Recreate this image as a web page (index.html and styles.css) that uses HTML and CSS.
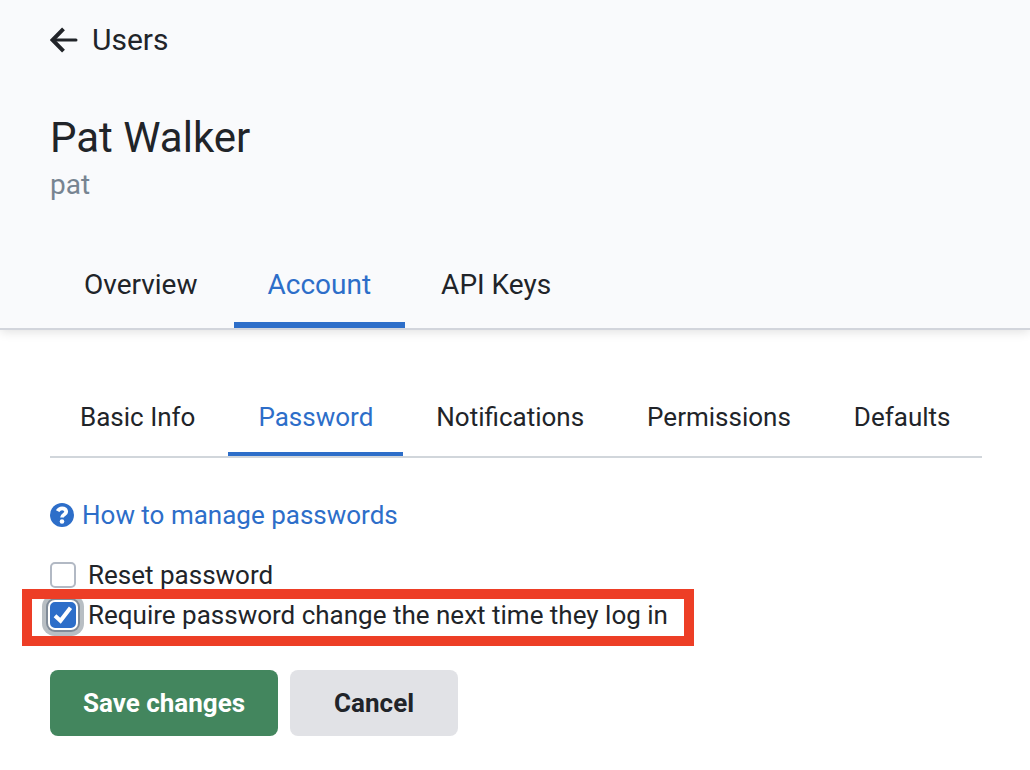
FILE: index.html
```html
<!DOCTYPE html>
<html lang="en">
<head>
<meta charset="utf-8">
<title>Pat Walker - Users</title>
<link rel="stylesheet" href="styles.css">
</head>
<body>
<header class="page-header">
  <a class="back" href="#users">
    <svg class="back-icon" viewBox="0 0 28 28" aria-hidden="true"><path class="shaft" d="M26 14H3"/><path d="M13.500 2.800L2.500 14L13.500 25.200"/></svg>
    <span>Users</span>
  </a>
  <h1 class="name">Pat Walker</h1>
  <p class="login">pat</p>
  <nav class="tabs">
    <a class="tab" href="#overview">Overview</a>
    <a class="tab active" href="#account" aria-current="page">Account</a>
    <a class="tab" href="#api-keys">API Keys</a>
  </nav>
</header>
<main class="content">
  <nav class="subtabs">
    <a class="subtab" href="#basic-info">Basic Info</a>
    <a class="subtab active" href="#password" aria-current="page">Password</a>
    <a class="subtab" href="#notifications">Notifications</a>
    <a class="subtab" href="#permissions">Permissions</a>
    <a class="subtab" href="#defaults">Defaults</a>
  </nav>
  <a class="help" href="#help">
    <svg class="help-icon" viewBox="0 0 24 24" aria-hidden="true"><circle cx="12" cy="12" r="12"/><path d="M7.700 8.200C8.700 6.200 10 5.300 12.100 5.300C14.500 5.300 16.200 6.700 16.200 8.700C16.200 11.500 12 11.500 12 14.600"/><circle class="dot" cx="12" cy="18.500" r="2.300"/></svg>
    <span>How to manage passwords</span>
  </a>
  <form class="form">
    <div class="option">
      <input class="check" type="checkbox" id="reset">
      <label for="reset">Reset password</label>
    </div>
    <div class="option highlighted">
      <span class="check-wrap">
        <input class="check focused" type="checkbox" id="require" checked>
        <svg class="tick" viewBox="0 0 26 26" aria-hidden="true"><path d="M5 13.800L10.500 18.800L20.500 5.800"/></svg>
      </span>
      <label for="require">Require password change the next time they log in</label>
    </div>
    <div class="actions">
      <button class="button primary" type="button">Save changes</button>
      <button class="button secondary" type="button">Cancel</button>
    </div>
  </form>
</main>
</body>
</html>
```
FILE: styles.css
```css
* {
  box-sizing: border-box;
}

body {
  margin: 0;
  background: #fff;
  color: #212429;
  font-family: Roboto, "Liberation Sans", sans-serif;
  font-size: 26px;
  line-height: 32px;
}

a {
  color: inherit;
  text-decoration: none;
}

.page-header {
  padding: 20px 48px 0 50px;
  background: #f9fafc;
  border-bottom: 2px solid #d2d5dc;
  box-shadow: 0 2px 10px rgba(0, 0, 0, 0.12);
}

.back {
  display: inline-flex;
  align-items: center;
  gap: 14px;
  font-size: 30px;
  line-height: 40px;
}

.back-icon {
  width: 28px;
  height: 28px;
  fill: none;
  stroke: currentColor;
  stroke-width: 4;
}

.back-icon .shaft {
  stroke-width: 3;
  stroke-linecap: round;
}

.name {
  margin: 51px 0 0;
  font-size: 42px;
  font-weight: 400;
  line-height: 52px;
}

.login {
  margin: 5px 0 0;
  color: #778491;
  font-size: 28px;
  line-height: 32px;
}

.tabs {
  display: flex;
  gap: 2px;
  margin-top: 40px;
  font-size: 28px;
}

.tab {
  padding: 28px 34px 21px;
  border-bottom: 6px solid transparent;
}

.subtabs {
  display: flex;
  gap: 3px;
  border-bottom: 2px solid #d1d6db;
}

.subtab {
  padding: 22px 30px 19px;
  border-bottom: 4px solid transparent;
}

.active {
  border-color: #2d6ec9;
  color: #2d6ec9;
}

.content {
  padding: 49px 48px 34px 50px;
}

.help {
  display: inline-flex;
  align-items: center;
  gap: 8px;
  margin-top: 41px;
  color: #2d6ec9;
}

.help-icon {
  width: 24px;
  height: 24px;
  fill: #2d6ec9;
}

.help-icon path {
  fill: none;
  stroke: #fff;
  stroke-width: 3.8;
}

.help-icon .dot {
  fill: #fff;
}

.form {
  margin-top: 21px;
}

.option {
  display: flex;
  align-items: center;
  gap: 12px;
  height: 40px;
}

.check {
  display: block;
  appearance: none;
  flex: none;
  width: 26px;
  height: 26px;
  margin: 0;
  border: 2px solid #b2b9c4;
  border-radius: 5px;
  background: #fff;
}

.check:checked {
  border-color: #2d6ec9;
  background: #2d6ec9;
}

.focused {
  box-shadow: 0 0 0 2px #fff, 0 0 0 4px #808b98, 0 0 0 8px #b8bec3;
}

.check-wrap {
  position: relative;
}

.tick {
  position: absolute;
  inset: 0;
  fill: none;
  stroke: #fff;
  stroke-width: 4;
  pointer-events: none;
}

.highlighted {
  position: relative;
  width: fit-content;
}

.highlighted::after {
  content: "";
  position: absolute;
  inset: -6px -26px -11px -28px;
  border: 10px solid #ed3e26;
  pointer-events: none;
}

.actions {
  display: flex;
  gap: 12px;
  margin-top: 35px;
}

.button {
  padding: 17px 33px;
  border: 0;
  border-radius: 8px;
  font: 700 26px/32px Roboto, "Liberation Sans", sans-serif;
}

.primary {
  background: #43865e;
  color: #fff;
}

.secondary {
  padding: 17px 44px;
  background: #e1e2e6;
  color: #212429;
}
```
